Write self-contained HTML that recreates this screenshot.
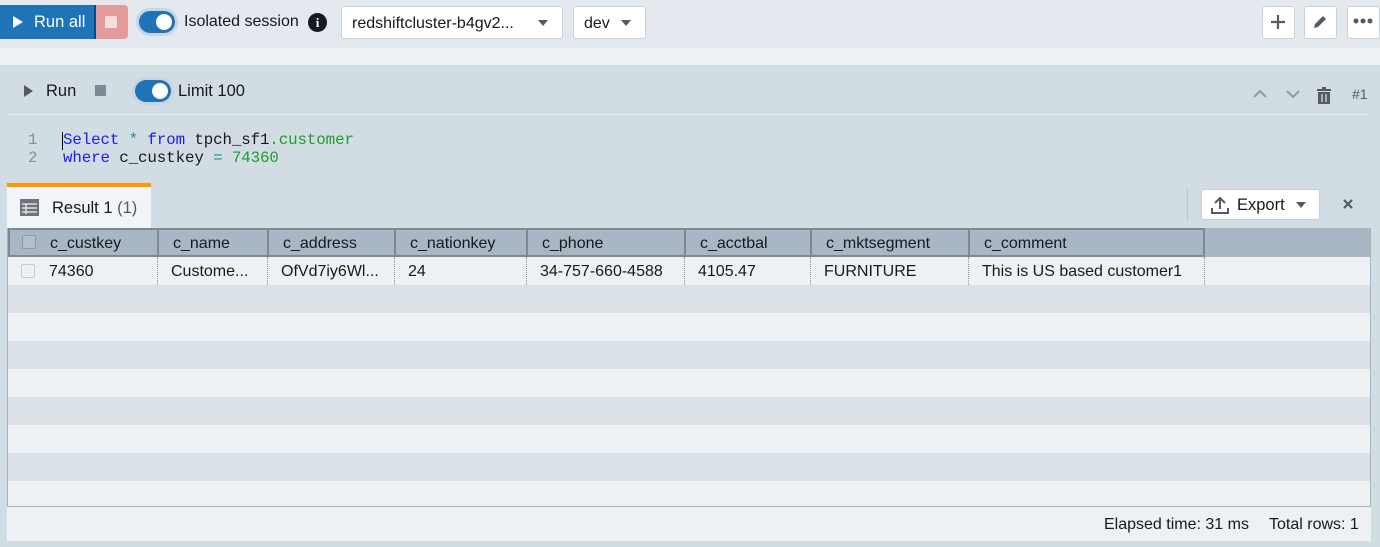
<!DOCTYPE html>
<html><head><style>
*{box-sizing:border-box;margin:0;padding:0}
body{width:1380px;height:547px;background:#d2dce3;font-family:"Liberation Sans",sans-serif;position:relative;overflow:hidden;color:#16191f}
.a{position:absolute}
.top{left:0;top:0;width:1380px;height:48px;background:#e3e9ef}
.strip{left:0;top:48px;width:1380px;height:17px;background:#edf1f4}
.btn{background:#fff;border:1px solid #c9d0d6;border-radius:3px}
.tog{width:36px;height:22px;border-radius:11px;background:#1f73b7;box-shadow:0 0 0 3px #c6d6e3}
.tog::after{content:"";position:absolute;right:3px;top:3px;width:16px;height:16px;border-radius:50%;background:#fff}
.tri{width:0;height:0;border-left:5px solid transparent;border-right:5px solid transparent;border-top:6px solid #545b64}
.code{font-family:"Liberation Mono",monospace;font-size:15.8px}
.hd{left:8px;top:228px;width:1362px;height:29px;background:#a8b7c3}
.hc{top:228px;height:29px;border:2px solid #7d8a96;background:#a8b7c3;padding-left:14px;line-height:27px;font-size:16px}
.rc{top:257px;height:28px;border-right:1px dotted #8a9299;line-height:29px;padding-left:13px;font-size:16px}
</style></head><body>
<div class="a top"></div>
<div class="a strip"></div>
<div class="a" style="left:0;top:5px;width:96px;height:34px;background:#1f73b7;border-right:2px solid #0f4a7a;color:#fff;font-size:16.5px;line-height:35px;padding-left:34px">Run all</div>
<div class="a" style="left:13px;top:16px;border-top:6px solid transparent;border-bottom:6px solid transparent;border-left:10px solid #fff"></div>
<div class="a" style="left:96px;top:5px;width:32px;height:34px;background:#e39a9a;border-radius:0 4px 4px 0"></div>
<div class="a" style="left:105px;top:16px;width:12px;height:12px;background:#f7dede"></div>
<div class="a tog" style="left:139px;top:11px"></div>
<div class="a" style="left:184px;top:13px;font-size:16px">Isolated session</div>
<div class="a" style="left:308px;top:13px;width:19px;height:19px;border-radius:50%;background:#16191f;color:#fff;font-size:13px;font-weight:bold;text-align:center;line-height:19px;font-family:'Liberation Serif',serif">i</div>
<div class="a btn" style="left:341px;top:6px;width:222px;height:33px;font-size:16px;line-height:33px;padding-left:10px">redshiftcluster-b4gv2...</div>
<div class="a tri" style="left:538px;top:20px"></div>
<div class="a btn" style="left:573px;top:6px;width:73px;height:33px;font-size:16px;line-height:33px;padding-left:10px">dev</div>
<div class="a tri" style="left:621px;top:20px"></div>
<div class="a btn" style="left:1262px;top:6px;width:33px;height:33px"></div>
<svg class="a" style="left:1268px;top:12px" width="20" height="20"><path d="M10 3v14M3 10h14" stroke="#545b64" stroke-width="2.2"/></svg>
<div class="a btn" style="left:1304px;top:6px;width:33px;height:33px"></div>
<svg class="a" style="left:1310px;top:12px" width="20" height="20"><path d="M4 16l1-4 8-8 3 3-8 8z" fill="#545b64"/></svg>
<div class="a btn" style="left:1347px;top:6px;width:33px;height:33px"></div>
<svg class="a" style="left:1352px;top:17px" width="24" height="8"><circle cx="4" cy="4" r="2.5" fill="#545b64"/><circle cx="11" cy="4" r="2.5" fill="#545b64"/><circle cx="18" cy="4" r="2.5" fill="#545b64"/></svg>

<div class="a" style="left:24px;top:85px;border-top:6px solid transparent;border-bottom:6px solid transparent;border-left:9px solid #545b64"></div>
<div class="a" style="left:46px;top:82px;font-size:16.5px">Run</div>
<div class="a" style="left:95px;top:85px;width:11px;height:11px;background:#7d8a96"></div>
<div class="a tog" style="left:135px;top:80px"></div>
<div class="a" style="left:178px;top:82px;font-size:16.5px">Limit 100</div>
<svg class="a" style="left:1252px;top:86px" width="100" height="20"><path d="M2 11l6-6 6 6M35 5l6 6 6-6" stroke="#8d9ba7" stroke-width="2" fill="none"/><path d="M65 4h14M70 2h4" stroke="#545b64" stroke-width="2"/><rect x="66" y="6" width="12" height="12" fill="#545b64"/><path d="M70 8v8M74 8v8" stroke="#d2dce3" stroke-width="1.3"/></svg>
<div class="a" style="left:1352px;top:86px;font-size:14px;color:#545b64">#1</div>
<div class="a" style="left:8px;top:114px;width:1360px;height:1px;background:#e6ecf0"></div>

<div class="a code" style="left:28px;top:131px;color:#8a9096;line-height:18px">1<br>2</div>
<div class="a" style="left:62px;top:132px;width:1px;height:18px;background:#000"></div>
<div class="a code" style="left:63px;top:131px;line-height:18px;letter-spacing:-0.1px"><span style="color:#1c1cf2">Select</span> <span style="color:#1a8f8f">*</span> <span style="color:#1c1cf2">from</span> tpch_sf1<span style="color:#1d9d2f">.customer</span><br><span style="color:#1c1cf2">where</span> c_custkey <span style="color:#1a8f8f">=</span> <span style="color:#1d9d2f">74360</span></div>

<div class="a" style="left:7px;top:183px;width:144px;height:45px;background:#f2f5f7;border-top:4px solid #ff9900"></div>
<svg class="a" style="left:20px;top:199px" width="19" height="17"><rect width="19" height="17" fill="#6b7580"/><path d="M2 5h15M2 9h15M2 13h15M6 5v10" stroke="#f2f5f7" stroke-width="1.2"/></svg>
<div class="a" style="left:52px;top:199px;font-size:16.5px">Result 1 <span style="color:#545b64">(1)</span></div>
<div class="a" style="left:1187px;top:188px;width:1px;height:33px;background:#bcc6ce"></div>
<div class="a btn" style="left:1201px;top:189px;width:119px;height:31px;font-size:16.5px;line-height:31px;padding-left:35px">Export</div>
<svg class="a" style="left:1210px;top:195px" width="20" height="20"><path d="M10 14V3M5 8l5-5 5 5M2 13v5h16v-5" stroke="#545b64" stroke-width="2" fill="none"/></svg>
<div class="a tri" style="left:1296px;top:202px"></div>
<svg class="a" style="left:1342px;top:198px" width="12" height="12"><path d="M2 2l8 8M10 2l-8 8" stroke="#545b64" stroke-width="2.2"/></svg>

<div class="a" style="left:7px;top:228px;width:1364px;height:279px;border:1px solid #a8b3bc;background:#d9e1e7"></div>
<div class="a" style="left:8px;top:257px;width:1362px;height:28px;background:#edf1f4"></div>
<div class="a" style="left:8px;top:313px;width:1362px;height:28px;background:#edf1f4"></div>
<div class="a" style="left:8px;top:369px;width:1362px;height:28px;background:#edf1f4"></div>
<div class="a" style="left:8px;top:425px;width:1362px;height:28px;background:#edf1f4"></div>
<div class="a" style="left:8px;top:481px;width:1362px;height:25px;background:#edf1f4"></div>
<div class="a hd"></div>
<div class="a hc" style="left:8px;width:151px;padding-left:40px">c_custkey</div>
<div class="a" style="left:22px;top:235px;width:14px;height:14px;border:1px solid #8d9ba7;border-radius:2px;background:#b3c0cb"></div>
<div class="a hc" style="left:157px;width:112px">c_name</div>
<div class="a hc" style="left:267px;width:129px">c_address</div>
<div class="a hc" style="left:394px;width:134px">c_nationkey</div>
<div class="a hc" style="left:526px;width:160px">c_phone</div>
<div class="a hc" style="left:684px;width:128px">c_acctbal</div>
<div class="a hc" style="left:810px;width:160px">c_mktsegment</div>
<div class="a hc" style="left:968px;width:237px">c_comment</div>
<div class="a rc" style="left:8px;width:150px;padding-left:41px">74360</div>
<div class="a" style="left:21px;top:264px;width:14px;height:14px;border:1px solid #c4ccd3;border-radius:2px;background:#eef1f4"></div>
<div class="a rc" style="left:158px;width:110px">Custome...</div>
<div class="a rc" style="left:268px;width:127px">OfVd7iy6Wl...</div>
<div class="a rc" style="left:395px;width:132px">24</div>
<div class="a rc" style="left:527px;width:158px">34-757-660-4588</div>
<div class="a rc" style="left:685px;width:126px">4105.47</div>
<div class="a rc" style="left:811px;width:158px">FURNITURE</div>
<div class="a rc" style="left:969px;width:236px">This is US based customer1</div>

<div class="a" style="left:7px;top:507px;width:1364px;height:34px;background:#edf1f4"></div>
<div class="a" style="left:1104px;top:516px;font-size:16px">Elapsed time: 31 ms</div>
<div class="a" style="left:1269px;top:516px;font-size:16px">Total rows: 1</div>
</body></html>
